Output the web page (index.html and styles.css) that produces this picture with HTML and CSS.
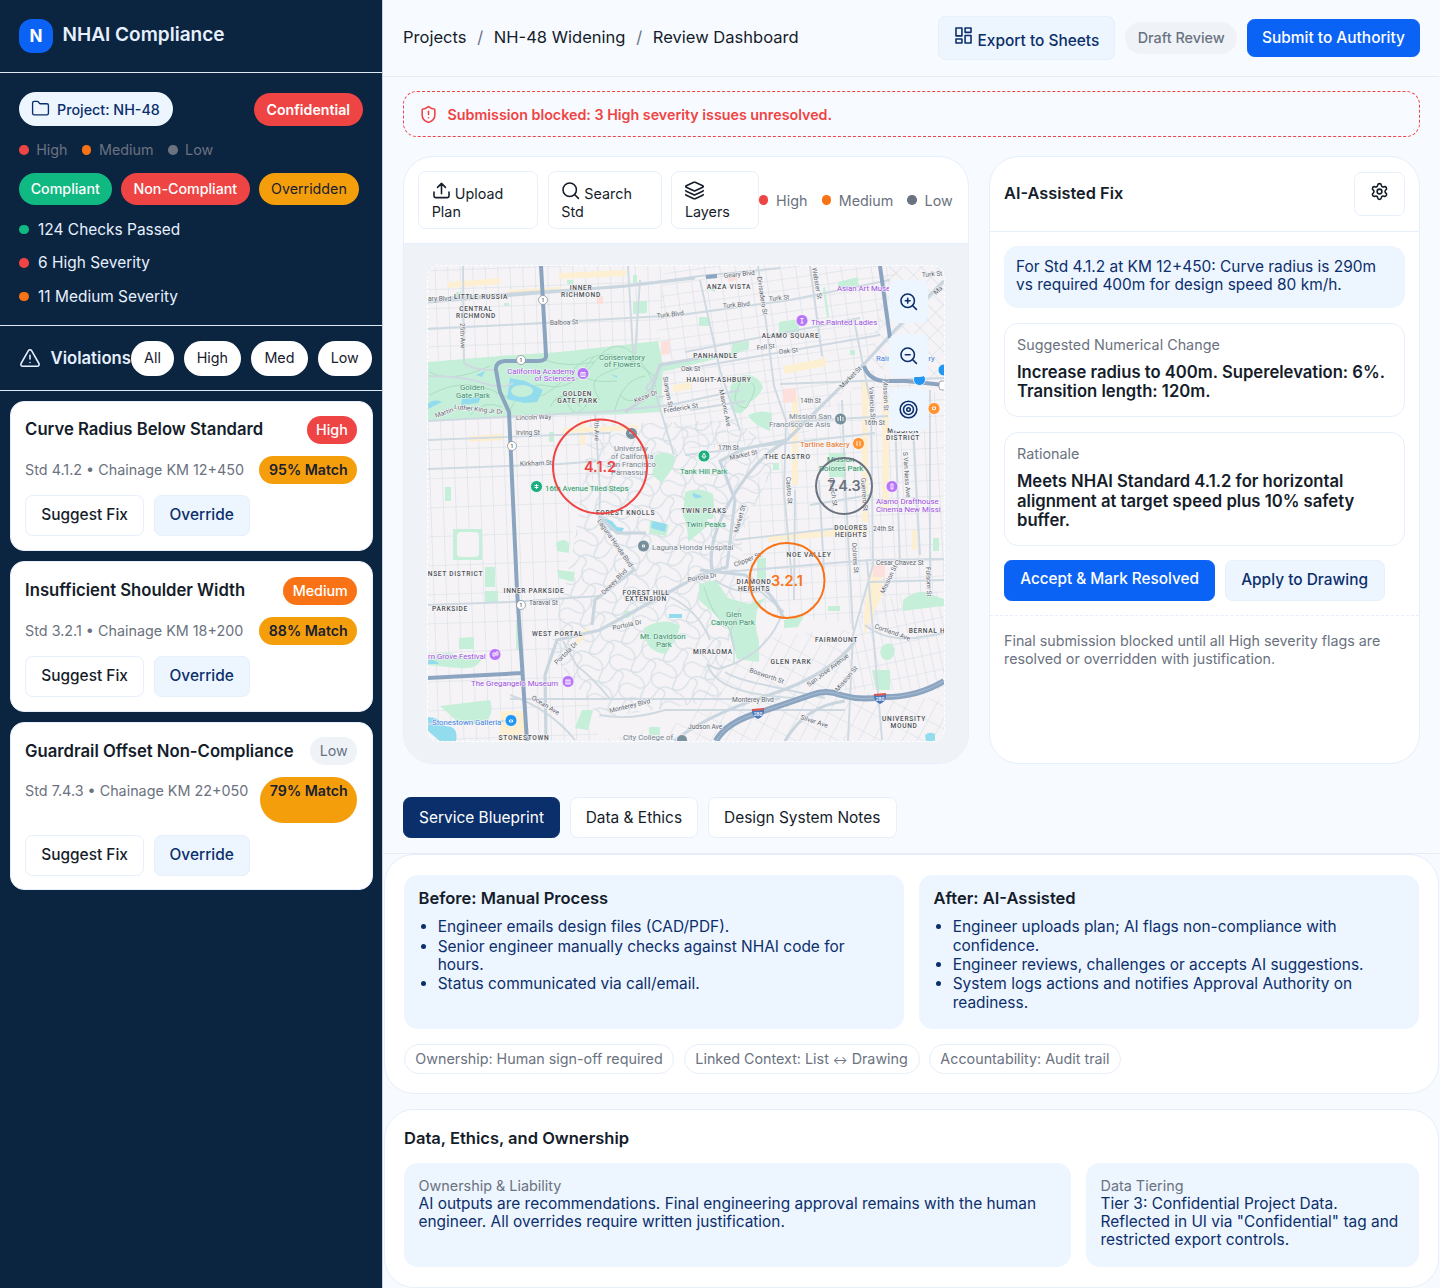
FILE: index.html
```html
<!DOCTYPE html>
<html lang="en">
<head>
<meta charset="utf-8">
<title>NHAI Compliance</title>
<link rel="stylesheet" href="styles.css">
</head>
<body>
<div class="app">
  <aside class="sidebar">
    <div class="brand"><span class="logo">N</span><span class="brand-name">NHAI Compliance</span></div>
    <section class="summary">
      <div class="project-row">
        <span class="project-pill"><svg class="icon" viewBox="0 0 24 24"><path d="M20 20a2 2 0 0 0 2-2V8a2 2 0 0 0-2-2h-7.900a2 2 0 0 1-1.690-.9L9.600 3.900A2 2 0 0 0 7.930 3H4a2 2 0 0 0-2 2v13a2 2 0 0 0 2 2Z"/></svg>Project: NH-48</span>
        <span class="confidential">Confidential</span>
      </div>
      <div class="legend side-legend"><span><i class="dot red"></i>High</span><span><i class="dot orange"></i>Medium</span><span><i class="dot gray"></i>Low</span></div>
      <div class="status-row"><span class="status ok">Compliant</span><span class="status bad">Non-Compliant</span><span class="status over">Overridden</span></div>
      <ul class="stats"><li><i class="dot green"></i>124 Checks Passed</li><li><i class="dot red"></i>6 High Severity</li><li><i class="dot orange"></i>11 Medium Severity</li></ul>
    </section>
    <div class="violations-head">
      <svg class="icon warn" viewBox="0 0 24 24"><path d="m21.730 18-8-14a2 2 0 0 0-3.480 0l-8 14A2 2 0 0 0 4 21h16a2 2 0 0 0 1.730-3"/><path d="M12 9v4M12 17h.01"/></svg>
      <span class="violations-title">Violations</span>
      <div class="filters"><span class="f-all">All</span><span class="f-high">High</span><span class="f-med">Med</span><span class="f-low">Low</span></div>
    </div>
    <div class="violations">
      <article class="violation">
        <div class="v-row"><h3>Curve Radius Below Standard</h3><span class="badge red">High</span></div>
        <div class="v-row v-meta"><span>Std 4.1.2 • Chainage KM 12+450</span><span class="badge match">95% Match</span></div>
        <div class="v-actions"><button class="btn suggest">Suggest Fix</button><button class="btn soft override">Override</button></div>
      </article>
      <article class="violation">
        <div class="v-row"><h3>Insufficient Shoulder Width</h3><span class="badge orange">Medium</span></div>
        <div class="v-row v-meta"><span>Std 3.2.1 • Chainage KM 18+200</span><span class="badge match">88% Match</span></div>
        <div class="v-actions"><button class="btn suggest">Suggest Fix</button><button class="btn soft override">Override</button></div>
      </article>
      <article class="violation tall">
        <div class="v-row"><h3>Guardrail Offset Non-Compliance</h3><span class="badge low">Low</span></div>
        <div class="v-row v-meta"><span>Std 7.4.3 • Chainage KM 22+050</span><span class="badge match">79% Match</span></div>
        <div class="v-actions"><button class="btn suggest">Suggest Fix</button><button class="btn soft override">Override</button></div>
      </article>
    </div>
  </aside>

  <main class="main">
    <header class="topbar">
      <nav class="crumbs"><span>Projects</span><b>/</b><span>NH-48 Widening</span><b>/</b><span>Review Dashboard</span></nav>
      <div class="top-actions">
        <button class="btn soft export"><svg class="icon" viewBox="0 0 24 24"><rect x="2.500" y="2.500" width="7.500" height="10"/><rect x="14" y="2.500" width="7.500" height="5.500"/><rect x="14" y="12" width="7.500" height="9.500"/><rect x="2.500" y="16.500" width="7.500" height="5"/></svg><span>Export to Sheets</span></button>
        <span class="draft">Draft Review</span>
        <button class="btn primary submit">Submit to Authority</button>
      </div>
    </header>

    <div class="alert"><svg class="icon" viewBox="0 0 24 24"><path d="M20 13c0 5-3.500 7.500-7.660 8.950a1 1 0 0 1-.670-.010C7.500 20.500 4 18 4 13V6a1 1 0 0 1 1-1c2 0 4.500-1.200 6.240-2.720a1.170 1.170 0 0 1 1.520 0C14.510 3.810 17 5 19 5a1 1 0 0 1 1 1z"/><path d="M12 8v4M12 16h.01"/></svg><span>Submission blocked: 3 High severity issues unresolved.</span></div>

    <div class="workspace">
      <section class="card plan">
        <div class="toolbar">
          <button class="btn tool t-upload"><svg class="icon" viewBox="0 0 24 24"><path d="M12 16V3M7 8l5-5 5 5M2.500 14v5a2 2 0 0 0 2 2h15a2 2 0 0 0 2-2v-5"/></svg> Upload<br>Plan</button>
          <button class="btn tool t-search"><svg class="icon" viewBox="0 0 24 24"><circle cx="11" cy="11" r="8.500"/><path d="m22 22-4.900-4.900"/></svg> Search<br>Std</button>
          <button class="btn tool t-layers"><svg class="icon" viewBox="0 0 24 24"><path d="M12.830 1.680a2 2 0 0 0-1.660 0L1.600 6.080a1 1 0 0 0 0 1.830l9.580 4.410a2 2 0 0 0 1.660 0l9.580-4.400a1 1 0 0 0 0-1.830z"/><path d="M1 12a1 1 0 0 0 .6.910l9.580 4.400a2 2 0 0 0 1.650 0l9.580-4.400A1 1 0 0 0 23 12"/><path d="M1 17a1 1 0 0 0 .6.910l9.580 4.400a2 2 0 0 0 1.650 0l9.580-4.400A1 1 0 0 0 23 17"/></svg><br>Layers</button>
          <div class="legend"><span><i class="dot red"></i>High</span><span><i class="dot orange"></i>Medium</span><span><i class="dot gray"></i>Low</span></div>
        </div>
        <div class="map-area">
          <div class="map">
          <svg class="map-svg" viewBox="428 266 516 475">
            <defs>
              <pattern id="gRich" width="12.500" height="19" patternUnits="userSpaceOnUse" patternTransform="rotate(-2)"><path class="st" d="M0 0H12.500M0 0V19"/></pattern>
              <pattern id="gSun" width="12.500" height="29" patternUnits="userSpaceOnUse" patternTransform="rotate(-2)"><path class="st" d="M0 0H12.500M0 0V29"/></pattern>
              <pattern id="gNe" width="15" height="11" patternUnits="userSpaceOnUse" patternTransform="rotate(-8)"><path class="st" d="M0 0H15M0 0V11"/></pattern>
              <pattern id="gMis" width="12" height="16" patternUnits="userSpaceOnUse" patternTransform="rotate(-3)"><path class="st" d="M0 0H12M0 0V16"/></pattern>
              <pattern id="gSoma" width="11" height="14" patternUnits="userSpaceOnUse" patternTransform="rotate(-45)"><path class="st" d="M0 0H11M0 0V14"/></pattern>
              <pattern id="gBern" width="9" height="17" patternUnits="userSpaceOnUse" patternTransform="rotate(-12)"><path class="st" d="M0 0H9M0 0V17"/></pattern>
              <pattern id="gSth" width="13" height="20" patternUnits="userSpaceOnUse" patternTransform="rotate(28)"><path class="st" d="M0 0H13M0 0V20"/></pattern>
              <pattern id="gHill" width="34" height="30" patternUnits="userSpaceOnUse" patternTransform="rotate(-18)"><path class="st" d="M0 8Q9-2 17 8T34 8M0 23Q9 14 17 22T34 23M5 0Q-3 12 6 18T5 30M24 0Q31 10 23 17T24 30"/></pattern>
            </defs>
            <rect class="land" x="428" y="266" width="516" height="475"/>
            <path fill="url(#gRich)" d="M428 266H664L660 345 428 362z"/>
            <path fill="url(#gSun)" d="M428 421L626 408 575 520 560 600 600 741H428z"/>
            <path fill="url(#gNe)" d="M664 266H900L870 360 800 442 690 450 650 395z"/>
            <path fill="url(#gMis)" d="M800 442L870 370 944 395V600L860 625 735 610 755 480z"/>
            <path fill="url(#gSoma)" d="M885 266H944V385L870 366z"/>
            <path fill="url(#gBern)" d="M865 600L944 590V690L840 690z"/>
            <path fill="url(#gSth)" d="M710 640L850 630 835 690 944 700V741H600L690 720z"/>
            <path fill="url(#gHill)" d="M590 425L735 420 780 455 745 525 735 600 720 700 600 718 550 650 575 540z"/>
            <g class="sand">
              <path d="M448 282l52-4v6l-52 4zM559 273l67-3v6l-67 3zM508 290l54-3v5l-54 3zM469 436l34-2v6l-34 2zM563 428l75-3v5l-75 3zM580 420h5v25h-5zM784 366l42-8v8l-42 8zM768 536l100-9v6l-100 9zM862 382h6v140h-6zM882 395h7v115h-7zM912 530h5v20h-5zM864 610l8-45h10v30l-18 40zM792 395h6v90h-6zM673 385l18-3v7l-18 3zM500 711h25v30h-25zM590 630l-12 15-3-4 11-13z"/>
            </g>
            <path class="hosp" d="M783 389l13-1v14l-13 1zM661 342l9-2v14l-9 1zM873 565h12v12h-12zM728 275l9-2v7l-9 2zM597 296h6v8h-6z"/>
            <g class="park">
              <path d="M428 362L500 356 560 352 658 341 663 365 661 412 625 414 560 415 428 421z"/>
              <path d="M662 365l70-13v-9l17-2v8l-21 7-66 16zM633 302l14-1v12l-14 1zM779 322l20-3v13l-20 2zM838 282l20-5v8l-20 6zM730 394q-1-16 15-19 12-1 18 12-4 10-13 15-7 15-16 10-6-6-4-18zM748 415q12-6 24-2l-2 18q-17-6-22-16zM655 455q12-6 20 2l-3 12-10 14-10-8zM685 492q14-6 28 2l2 20q-8-5-8 12l-9 8-10 8q0-18-5-26zM706 511h7v8h-7zM829 453h17v24h-17z"/>
              <path d="M699 584l17-4 12 18 21 6 16-6-8 12q-3 18 2 30v22l-22-3-10-34-28-25zM650 520l19 5-3 11-17-3zM556 543q8-6 13 0v10l-12-2zM557 570l18 2-2 10-14-4zM453 529h29v31h-29zM485 591h13v12h-13zM485 567h10v20h-10zM459 638l15-1v12h-15zM428 660q16-11 28-5t26 3q-4 12-24 10l-30-3zM516 620h5v30h-5zM644 628q20-12 36-2-3 12-14 28-22-2-22-26zM582 710h11l-5 20-13-2zM903 600q14-11 24-7l17 6v7q-18 2-41 5zM872 670h18v20h-14zM884 645q8-5 11 5-2 13-12 9-6-8 1-14zM757 558h9v22h-9zM784 620l20-4-6 11-14 1zM440 706l50-6q6 18-10 25l-22-3zM933 538h6v13h-6zM649 727h11v8h-11zM828 606h12v5h-12z"/>
              <path d="M445 487h6v14h-6zM549 432h5v10h-5zM626 610l8 3-6 5-7-1zM707 289l8-3v6zM699 317h10v9h-10zM850 350h5v5h-5zM773 463h6v7h-6zM825 287l4 30-2 1-4-30zM456 292h5v6h-5zM504 303h5v3h-5zM567 280h6v4h-6zM633 275h4v8h-4zM541 378h0z"/>
            </g>
            <path class="parkline" d="M430 395q35-20 70-1t70-21 88 6M510 410q15-30 38-24t50-28 58 29M550 407q12-22 31 0M595 356q-30 29 22 25M615 410q7-30 30-34M600 400c-20-30 15-25 40-43M740 383q-12 23 6 25 14-22 5-25M704 587q9 30 20 36t10 42M553 402q8-12 16 4t22-8M620 395q12 14 30-6M545 360q20 8 50 2M430 372q20 12 60-6M470 415q14-16 32-8"/>
            <rect class="land" x="457" y="532" width="22" height="25" rx="4"/>
            <g class="water"><path d="M510 378l15 3 18 9-6 12-13 1-17-4zM427 405q6-7 15-3l-14 7zM462 399l20-3-4 7-17 2zM603 518l9 3 5 6 7 1-2 4-12-2zM652 521l15 3-2 8-14-4zM428 717q10 0 17 9 14 0 11 15H440l-12-10zM693 493a4 3 0 1 0 9 3zM428 660q7-1 11 4h-11zM669 614h13v4h-13zM925 735q4-4 10-1v7h-9zM610 374l7 2v2zM476 375l9-4-3 6z"/></g>
            <ellipse class="park" cx="522" cy="391" rx="11" ry="6"/>
            <g class="road">
              <path d="M428 299L545 291 620 287 700 276 780 268M428 329L525 324 680 315 790 300 890 280M463 266l1 97q8 7 30 7M664 363l-18 25q12 12 18 8M428 421L615 411 670 405 740 390M428 440L610 433M428 469L560 464 600 461M428 605L510 602 600 596M595 412l5 80-1 30M640 280l-5 75M428 376q35 0 55 7t30 0M628 266l5 86M656 395l18 60"/>
              <path d="M700 280l20 90 20 60M758 266l8 56 8 64 12 35-2 70 8 90M810 266l12 90M854 320l17 85 2 160-20 70-5 106M685 352L860 318M685 369L880 335M690 410L745 401M685 455L875 433M780 384L944 378M790 422L888 416M735 540L864 525M810 505L870 495M725 572L870 560 944 559M867 560l15 180M819 480l5 90M795 490l-1 110M912 405l8 150M930 390v205M895 415l5 150M945 580L870 582M842 400l3 80 8 150"/>
              <path d="M735 650l-5-17 10-25M710 640q-12-30-40-43M715 580q20 15 45 11l23 20q-15 45-65 58l-10-4q8 30 90 33M780 699L510 699M610 699q-18-22-33-33l-14-25M428 724l80-3M510 695q40 14 65 45M600 715q30 6 65-5h180M865 625q20 16 50 13l29-5M725 672q10 7 40 13l60 13"/>
            </g>
            <g class="road maj">
              <path d="M428 302l197-16 70-8M800 270M944 281L895 330 865 363 787 440 743 449 720 461 735 500 727 567 700 575 600 630 557 640 545 675 546 741M625 412L650 395 660 365 700 358M599 516l18 17h29M600 520l34 50-39 30-3 25M712 570q-5-30 20-72t55-57M856 640q-25 35-87 55t-95 46M785 741q20-35 60-40M700 570l45 5q27 14 39 44"/>
            </g>
            <g class="hwy">
              <path d="M541 266L546 355Q547 361 538 361L505 361Q495 362 496 370L500 392 509 412 517 590 527 741M428 678L522 673M880 266L890 338M864 366q5 14 20 15h22l38 4M706 277l11-1"/>
              <path class="thick" d="M716 741q10-19 45-29l50-17q15-6 30 0 20 6 40 2 35 1 63-16"/>
              <path class="casing" d="M716 741q10-19 45-29l50-17q15-6 30 0 20 6 40 2 35 1 63-16"/>
            </g>
            <g class="shield"><circle cx="543" cy="300" r="4.500"/><circle cx="521" cy="360" r="4.500"/><circle cx="512" cy="446" r="4.500"/><circle cx="521" cy="605" r="4.500"/><rect x="939" y="381" width="9" height="9" rx="3"/></g>
            <g class="shield-no"><text x="543" y="302">1</text><text x="521" y="362">1</text><text x="512" y="448">1</text><text x="521" y="607">1</text></g>
            <g class="inter"><path d="M752 709q6 3 12 0 1 7-6 10-7-3-6-10zM874 694q6 3 12 0 1 7-6 10-7-3-6-10z"/></g>
            <path class="inter-top" d="M752 710l12-1M874 695l12-1"/>
            <g class="shield-no light"><text x="758" y="716">280</text><text x="880" y="701">280</text></g>
            <g class="area">
              <text x="481" y="298.500">LITTLE RUSSIA</text><text x="476" y="311">CENTRAL</text><text x="476" y="318">RICHMOND</text><text x="581" y="290">INNER</text><text x="581" y="296.500">RICHMOND</text><text x="729" y="289">ANZA VISTA</text><text x="790.500" y="338">ALAMO SQUARE</text><text x="715.500" y="358">PANHANDLE</text><text x="719" y="381.500">HAIGHT-ASHBURY</text><text x="577.500" y="396">GOLDEN</text><text x="577.500" y="403">GATE PARK</text><text x="787.500" y="458.500">THE CASTRO</text><text x="903" y="433">MISSION</text><text x="903" y="440">DISTRICT</text>
              <text x="625.500" y="514.500">FOREST KNOLLS</text><text x="704" y="512.500">TWIN PEAKS</text><text x="455.500" y="576">NSET DISTRICT</text><text x="534" y="593">INNER PARKSIDE</text><text x="450" y="611">PARKSIDE</text><text x="646" y="594.500">FOREST HILL</text><text x="646" y="601">EXTENSION</text><text x="557.500" y="636">WEST PORTAL</text><text x="524" y="740">STONESTOWN</text><text x="851" y="530">DOLORES</text><text x="851" y="537">HEIGHTS</text><text x="809" y="557">NOE VALLEY</text><text x="754" y="584">DIAMOND</text><text x="754" y="591">HEIGHTS</text><text x="836.500" y="641.500">FAIRMOUNT</text><text x="713" y="654">MIRALOMA</text><text x="791" y="663.500">GLEN PARK</text><text x="927" y="633">BERNAL H</text><text x="904" y="721">UNIVERSITY</text><text x="904" y="728">MOUND</text>
            </g>
            <g class="street">
              <text x="428" y="301">ary Blvd</text><text x="550" y="325" transform="rotate(-2 550 325)">Balboa St</text><text x="657" y="318" transform="rotate(-6 657 318)">Turk Blvd</text><text transform="translate(460 323) rotate(88)">25th Ave</text><text x="516" y="420" transform="rotate(-2 516 420)">Lincoln Way</text><text x="516" y="435">Irving St</text><text x="520" y="466" transform="rotate(-2 520 466)">Kirkham St</text><text transform="translate(436 418) rotate(-20)">Martin</text><text x="454" y="409" transform="rotate(6 454 409)">Luther King Jr Dr</text><text transform="translate(594 419) rotate(88)">7th Ave</text><text transform="translate(635 403) rotate(-22)">Kezar Dr</text><text transform="translate(663 377) rotate(80)">Stanyan St</text><text transform="translate(664 413) rotate(-9)">Frederick St</text><text x="681" y="371">Oak St</text>
              <text x="724" y="278" transform="rotate(-6 724 278)">Geary Blvd</text><text transform="translate(757 277) rotate(81)">Divisadero St</text><text transform="translate(812 268) rotate(80)">Webster St</text><text x="723" y="308" transform="rotate(-4 723 308)">Turk Blvd</text><text x="769" y="301" transform="rotate(-5 769 301)">Turk St</text><text x="757" y="350" transform="rotate(-6 757 350)">Fell St</text><text x="779" y="354" transform="rotate(-6 779 354)">Oak St</text><text x="922" y="277" transform="rotate(-4 922 277)">Turk St</text><text transform="translate(842 389) rotate(-45)">Market St</text><text x="800" y="403">14th St</text><text x="864" y="425">16th St</text><text x="718" y="450">17th St</text><text x="730" y="460" transform="rotate(-12 730 460)">Market St</text><text transform="translate(719 390) rotate(78)">Masonic Ave</text><text transform="translate(869 387) rotate(87)">Valencia St</text><text transform="translate(883 380) rotate(88)">Mission St</text><text transform="translate(903 452) rotate(86)">S Van Ness Ave</text><text transform="translate(786 477) rotate(86)">Castro St</text><text transform="translate(829 478) rotate(82)">Church St</text><text transform="translate(861 478) rotate(86)">Guerrero St</text><text transform="translate(936 295) rotate(-42)">Ma</text>
              <text transform="translate(597 521) rotate(55)">Laguna Honda Blvd</text><text transform="translate(604 595) rotate(-45)">Dewey Blvd</text><text x="529" y="605">Taraval St</text><text transform="translate(613 630) rotate(-12)">Portola Dr</text><text transform="translate(557 665) rotate(-45)">Portola Dr</text><text transform="translate(688 582) rotate(-10)">Portola Dr</text><text transform="translate(531 699) rotate(31)">Ocean Ave</text><text transform="translate(610 713) rotate(-14)">Monterey Blvd</text><text transform="translate(738 533) rotate(-74)">Market St</text><text transform="translate(735 567) rotate(-22)">Clipper St</text><text transform="translate(852 543) rotate(86)">Dolores St</text><text x="873" y="531">24th St</text><text x="876" y="565">Cesar Chavez St</text><text transform="translate(884 594) rotate(-64)">Mission St</text><text transform="translate(926 567) rotate(88)">Folsom St</text><text transform="translate(874 628) rotate(20)">Cortland Ave</text><text transform="translate(749 672) rotate(19)">Bosworth St</text><text transform="translate(809 687) rotate(-37)">San Jose Avenue</text><text transform="translate(838 692) rotate(-50)">Mission St</text><text x="732" y="702">Monterey Blvd</text><text x="688" y="729">Judson Ave</text><text transform="translate(800 719) rotate(18)">Silver Ave</text>
            </g>
            <g class="poi purple"><text x="575" y="373.500" text-anchor="end">California Academy</text><text x="575" y="381" text-anchor="end">of Sciences</text><text x="837" y="291">Asian Art Muse</text><text x="811" y="324.500">The Painted Ladies</text><text x="876" y="504">Alamo Drafthouse</text><text x="876" y="512">Cinema New Missi</text><text x="428" y="658.500">rn Grove Festival</text><text x="471" y="685.500">The Gregangelo Museum</text></g>
            <g class="poi greentext"><text x="599" y="359.500">Conservatory</text><text x="604" y="367">of Flowers</text><text x="460" y="390">Golden</text><text x="456" y="398">Gate Park</text><text x="545" y="490.500">16th Avenue Tiled Steps</text><text x="680" y="473.500">Tank Hill Park</text><text x="686" y="527">Twin Peaks</text><text x="827" y="462">Mission</text><text x="819" y="470.500">Dolores Park</text><text x="640" y="639">Mt. Davidson</text><text x="656" y="647">Park</text><text x="726" y="617">Glen</text><text x="711" y="625">Canyon Park</text></g>
            <g class="poi slate"><text x="614" y="450.500">University</text><text x="611" y="458.500">of California</text><text x="607" y="466.500">San Francisco</text><text x="611" y="474.500">Parnassus...</text><text x="789" y="419">Mission San</text><text x="769" y="427">Francisco de Asis</text><text x="652" y="550">Laguna Honda Hospital</text><text x="623" y="740">City College of</text></g>
            <g class="poi bluetext"><text x="876" y="361">Rainbow Grocery</text><text x="432" y="724.500">Stonestown Galleria</text></g>
            <g class="poi orangetext"><text x="800" y="447">Tartine Bakery</text></g>
            <g class="pins">
              <g fill="#b875f8"><circle cx="583" cy="373.500" r="6"/><circle cx="802" cy="320.500" r="6"/><circle cx="892" cy="486.500" r="6"/><circle cx="495" cy="654.500" r="6"/><circle cx="568" cy="681.500" r="6"/></g>
              <g fill="#1eae7e"><circle cx="536.500" cy="486.500" r="6"/><circle cx="704" cy="456" r="6"/></g>
              <g fill="#78909c"><circle cx="631.500" cy="433.500" r="6"/><circle cx="840.500" cy="419" r="6"/><circle cx="643.500" cy="546" r="6"/><circle cx="682" cy="740" r="5.500"/></g>
              <g fill="#2196f3"><circle cx="511" cy="720.500" r="6"/><circle cx="919.500" cy="379.500" r="6"/><circle cx="944" cy="370" r="6"/></g>
              <g fill="#ff9130"><circle cx="858.500" cy="443.500" r="6"/><circle cx="934" cy="408.500" r="6"/></g>
              <path class="glyph" d="M580.500 372.500h5M581 373v3M583 373v3M585 373v3M580.500 376.500h5M800.500 318.500h3M802 318v5M800.500 323h3M565.500 680h5M566 680v4M568 680v4M570 680v4M565.500 684h5M493 653h2v3h-2zM496 652h2v3h-2zM891 484h2v5h-2zM536.500 484v5M534.500 485.500h4M534.500 487.500h4M704 453l-2 4h4zM704 457v2M838 417v4M840.500 416v5M843 417v4M629 433l5 0M642.500 545h2v2h-2zM509.500 720h3v2h-3zM857 441v5M860 441v5M932.500 407h3v2.500h-3z"/>
            </g>
            <g class="flag"><circle class="f-red" cx="600" cy="466.500" r="47"/><circle class="f-orange" cx="787" cy="580.500" r="37.500"/><circle class="f-gray" cx="844" cy="486" r="28"/></g>
            <g class="flag-no"><text class="t-red" x="600" y="471.500">4.1.2</text><text class="t-orange" x="787" y="585.500">3.2.1</text><text class="t-gray" x="844" y="491">7.4.3</text></g>
          </svg>
          <div class="map-tools">
            <span><svg class="icon" viewBox="0 0 24 24"><circle cx="11" cy="11" r="8.500"/><path d="m22 22-5-5M11 8v6M8 11h6"/></svg></span>
            <span><svg class="icon" viewBox="0 0 24 24"><circle cx="11" cy="11" r="8.500"/><path d="m22 22-5-5M8 11h6"/></svg></span>
            <span><svg class="icon" viewBox="0 0 24 24"><circle cx="12" cy="12" r="10.500"/><circle cx="12" cy="12" r="6.300"/><circle cx="12" cy="12" r="2.200"/></svg></span>
          </div>
          </div>
        </div>
      </section>

      <section class="card fix">
        <div class="fix-head"><h2>AI-Assisted Fix</h2><button class="btn gear"><svg class="icon" viewBox="0 0 24 24"><path d="M9.670 4.140a2.340 2.340 0 0 1 4.660 0 2.340 2.340 0 0 0 3.320 1.910 2.340 2.340 0 0 1 2.330 4.030 2.340 2.340 0 0 0 0 3.840 2.340 2.340 0 0 1-2.330 4.030 2.340 2.340 0 0 0-3.320 1.910 2.340 2.340 0 0 1-4.660 0 2.340 2.340 0 0 0-3.320-1.910 2.340 2.340 0 0 1-2.330-4.030 2.340 2.340 0 0 0 0-3.840 2.340 2.340 0 0 1 2.330-4.030 2.340 2.340 0 0 0 3.320-1.910"/><circle cx="12" cy="12" r="3"/></svg></button></div>
        <div class="fix-body">
          <p class="info">For Std 4.1.2 at KM 12+450: Curve radius is 290m<br>vs required 400m for design speed 80 km/h.</p>
          <div class="detail change"><span>Suggested Numerical Change</span><strong>Increase radius to 400m. Superelevation: 6%.<br>Transition length: 120m.</strong></div>
          <div class="detail rationale"><span>Rationale</span><strong>Meets NHAI Standard 4.1.2 for horizontal<br>alignment at target speed plus 10% safety<br>buffer.</strong></div>
          <div class="fix-actions"><button class="btn primary accept">Accept &amp; Mark Resolved</button><button class="btn soft apply">Apply to Drawing</button></div>
        </div>
        <p class="fix-note">Final submission blocked until all High severity flags are<br>resolved or overridden with justification.</p>
      </section>
    </div>

    <div class="tabs"><button class="btn tab1 active">Service Blueprint</button><button class="btn tab2">Data &amp; Ethics</button><button class="btn tab3">Design System Notes</button></div>

    <section class="panel blueprint">
      <div class="two">
        <div class="tile"><h4>Before: Manual Process</h4><ul><li>Engineer emails design files (CAD/PDF).</li><li>Senior engineer manually checks against NHAI code for<br>hours.</li><li>Status communicated via call/email.</li></ul></div>
        <div class="tile"><h4>After: AI-Assisted</h4><ul><li>Engineer uploads plan; AI flags non-compliance with<br>confidence.</li><li>Engineer reviews, challenges or accepts AI suggestions.</li><li>System logs actions and notifies Approval Authority on<br>readiness.</li></ul></div>
      </div>
      <div class="notes"><span class="n1">Ownership: Human sign-off required</span><span class="n2"><span>Linked Context: List <i class="arrow">↔</i> Drawing</span></span><span class="n3">Accountability: Audit trail</span></div>
    </section>

    <section class="panel ethics">
      <h4>Data, Ethics, and Ownership</h4>
      <div class="ethics-grid">
        <div class="tile"><span>Ownership &amp; Liability</span><p>AI outputs are recommendations. Final engineering approval remains with the human<br>engineer. All overrides require written justification.</p></div>
        <div class="tile"><span>Data Tiering</span><p>Tier 3: Confidential Project Data.<br>Reflected in UI via "Confidential" tag and<br>restricted export controls.</p></div>
      </div>
    </section>
  </main>
</div>
</body>
</html>
```
FILE: styles.css
```css
* { box-sizing: border-box; }
body { margin: 0; background: #f7faff; color: #151d2b; font: 15.440px/18px Inter, sans-serif; }
h2, h3, h4, p, ul { margin: 0; padding: 0; font-weight: 400; }
button { font: inherit; color: inherit; padding: 0; margin: 0; }
.app { display: flex; width: 1440px; height: 1288px; overflow: hidden; }
.icon { width: 19px; height: 19px; fill: none; stroke: currentColor; stroke-width: 2; stroke-linecap: round; stroke-linejoin: round; flex: none; }
.dot { width: 9.600px; height: 9.600px; border-radius: 50%; display: block; }
.red { background: #ef4444; }
.orange { background: #f97316; }
.gray { background: #6b7280; }
.green { background: #10b981; }

.btn { display: flex; align-items: center; justify-content: center; background: #fff; border: 1px solid #e6effb; border-radius: 7.600px; white-space: nowrap; }
.btn.soft { background: #edf5ff; color: #0b2f6b; font-weight: 500; }
.btn.primary { background: #0b63f6; border-color: #0b63f6; color: #fff; font-weight: 500; }

/* Sidebar */
.sidebar { width: 383px; flex: none; background: #0b2440; border-right: 1px solid #c9d4e2; color: #e6f0ff; }
.brand { height: 73px; border-bottom: 1px solid #dfe9f6; padding: 0 19px; display: flex; align-items: center; gap: 9.500px; }
.logo { width: 34px; height: 34px; border-radius: 13px; background: #0b63f6; color: #fff; font-weight: 700; font-size: 17px; display: grid; place-items: center; }
.brand-name { font-weight: 600; font-size: 19.050px; padding-bottom: 2px; }
.summary { height: 253px; border-bottom: 1px solid #dfe9f6; padding: 19px 19px 0; }
.project-row { display: flex; justify-content: space-between; align-items: center; height: 34px; }
.project-pill { width: 154px; height: 34px; border-radius: 17px; background: #edf5ff; color: #0b2f6b; font-size: 14.300px; font-weight: 500; display: flex; align-items: center; gap: 7px; padding: 1px 0 0 12px; }
.project-pill .icon { stroke-width: 1.700; position: relative; top: -1px; }
.confidential { width: 109.500px; height: 32.500px; border-radius: 17px; background: #ef4444; color: #fff; font-size: 14.200px; font-weight: 600; display: grid; place-items: center; margin-top: 1px; }
.legend { display: flex; gap: 14.400px; font-size: 14.300px; color: #6b7280; }
.legend span { display: flex; align-items: center; gap: 7.600px; }
.side-legend { margin-top: 15px; height: 18px; }
.status-row { display: flex; gap: 9.600px; margin-top: 13.500px; font-size: 14.250px; font-weight: 500; color: #fff; }
.status { height: 32.500px; border-radius: 17px; display: grid; place-items: center; }
.status.ok { background: #10b981; width: 92.500px; }
.status.bad { background: #ef4444; width: 128.500px; }
.status.over { background: #f59e0b; width: 99.500px; color: #17202e; font-weight: 400; }
.stats { list-style: none; display: grid; gap: 15.600px; margin-top: 15.500px; }
.stats li { display: flex; align-items: center; gap: 9.500px; height: 18px; }
.violations-head { height: 64.500px; border-bottom: 1px solid #dfe9f6; padding: 1px 0 0 19px; display: flex; align-items: center; }
.warn { width: 22px; height: 22px; stroke-width: 1.700; }
.violations-title { font-size: 16.700px; font-weight: 600; margin-left: 9.500px; width: 80.500px; flex: none; }
.filters { display: flex; gap: 9.600px; font-size: 14.300px; color: #17202e; }
.filters span { background: #fff; height: 35px; border-radius: 18px; display: grid; place-items: center; }
.f-all { width: 43px; } .f-high { width: 57.500px; } .f-med { width: 57.500px; } .f-low { width: 54px; }
.violations { padding: 10px 9.500px; display: grid; gap: 9.900px; }
.violation { height: 150.800px; width: 363.500px; border-radius: 14px; background: #fff; border: 1px solid #e6effb; color: #151d2b; padding: 14.400px 14.600px; }
.violation.tall { height: 168.500px; }
.v-row { display: flex; justify-content: space-between; align-items: center; height: 28px; }
.v-row h3 { font-size: 16.680px; font-weight: 600; white-space: nowrap; padding-bottom: 1px; }
.v-meta { margin-top: 12px; font-size: 14.350px; color: #6b7280; white-space: nowrap; }
.badge { height: 28px; padding: 0 9.600px; border-radius: 23px; font-size: 14.300px; font-weight: 500; color: #fff; line-height: 28px; }
.badge.match { background: #f59e0b; color: #17202e; font-weight: 600; font-size: 14.200px; }
.badge.low { background: #eff3f8; color: #6b7280; font-weight: 400; }
.v-actions { display: flex; gap: 9.600px; margin-top: 11.300px; }
.v-actions .btn { height: 41px; font-weight: 500; padding-bottom: 1px; }
.suggest { width: 119px; } .override { width: 96px; }
.tall .v-meta { height: 46px; align-items: flex-start; line-height: 28px; }
.tall .match { height: 46px; }

/* Main column */
.main { flex: 1; min-width: 0; padding-right: 1px; }
.topbar { height: 76.500px; border-bottom: 1px solid #e6edf7; padding: 0 19px 0 20px; display: flex; align-items: center; justify-content: space-between; }
.crumbs { display: flex; gap: 10.700px; font-size: 16.550px; padding-bottom: 2px; }
.crumbs b { font-weight: 400; color: #6b7280; }
.top-actions { display: flex; align-items: center; gap: 9.800px; }
.export { width: 177px; height: 44.500px; gap: 4px; }
.export .icon { position: relative; top: -2px; left: -1px; }
.export span { position: relative; top: 3px; }
.draft { width: 112px; height: 32.500px; border-radius: 17px; background: #eff3f8; color: #6b7280; font-size: 14.400px; font-weight: 500; display: grid; place-items: center; }
.submit { width: 173px; height: 38.500px; }
.alert { margin: 14.500px 19px 0 20px; height: 46px; border: 1px dashed #ef4444; border-radius: 14px; color: #ef4444; font-size: 14.290px; font-weight: 600; display: flex; align-items: center; gap: 10px; padding-left: 14.500px; }
.alert span { padding-top: 1px; }
.workspace { display: grid; grid-template-columns: 566px 431.500px; gap: 19.500px; margin: 19.200px 19px 0 20px; height: 607.500px; }
.card { border: 1px solid #e6effb; border-radius: 30px; background: #fff; overflow: hidden; }
.toolbar { height: 87px; border-bottom: 1px solid #e6effb; display: flex; align-items: center; padding-left: 14.200px; }
.tool { display: block; height: 57.500px; text-align: left; font-size: 14.350px; line-height: 18px; padding: 2px 0 0 12.500px; margin-right: 9.600px; }
.tool .icon { vertical-align: -1px; }
.t-upload { width: 120px; } .t-search { width: 114px; } .t-layers { width: 87.500px; margin-right: 0; }
.toolbar .legend { padding-top: 2px; gap: 14.200px; }
.toolbar .legend .dot { margin-top: -2px; }
.map-area { background: #eff3f8; height: 520px; padding: 21.500px 24px 23px; }
.map { position: relative; width: 516px; height: 475px; }
.map-svg { display: block; width: 516px; height: 475px; border-radius: 12px; outline: 1px dashed #fff; }
.map-tools { position: absolute; top: 14px; right: 16px; display: grid; gap: 11px; }
.map-tools span { width: 39.500px; height: 43px; border-radius: 8px; background: #edf5ff; color: #0b2f6b; display: grid; place-items: center; }
.fix-head { height: 74.500px; border-bottom: 1px solid #e6effb; padding: 0 14.500px; display: flex; align-items: center; justify-content: space-between; }
.fix-head h2 { font-size: 16.350px; font-weight: 600; padding-bottom: 1px; }
.gear { width: 50.500px; height: 44.500px; padding-bottom: 4px; }
.fix-body { padding: 14.400px 14.500px 0; }
.info { height: 62px; border-radius: 14px; background: #edf5ff; color: #0b2f6b; padding: 11.600px 12px; white-space: nowrap; }
.detail { border: 1px solid #e6effb; border-radius: 14px; margin-top: 14.600px; padding: 11.500px 12px; white-space: nowrap; }
.change { height: 94.600px; } .rationale { height: 114.600px; }
.detail span { display: block; font-size: 14.350px; line-height: 20px; color: #6b7280; font-weight: 400; }
.detail strong { display: block; font-size: 16.650px; line-height: 19.150px; font-weight: 600; margin-top: 8px; }
.fix-actions { display: flex; gap: 9.600px; margin-top: 14px; }
.fix-actions .btn { height: 41px; padding-bottom: 1px; }
.fix-actions .accept { width: 211px; padding-bottom: 3px; font-size: 15.300px; } .apply { width: 160px; }
.fix-note { margin-top: 14px; border-top: 1px dashed #e6effb; padding: 15.500px 14.500px; font-size: 14.270px; color: #6b7280; }
.tabs { height: 90.500px; padding: 33.500px 0 0 20px; display: flex; gap: 9.600px; border-bottom: 1px solid #e6edf7; }
.tabs .btn { height: 41px; }
.tab1 { width: 157px; } .tab2 { width: 128.500px; } .tab3 { width: 189px; }
.tabs .active { background: #0a2f6b; border-color: #0a2f6b; color: #fff; }
.panel { margin-left: 1px; width: 1055px; background: #fff; border: 1px solid #e6effb; border-radius: 30px; padding: 20px 19px; }
.blueprint { height: 239.500px; }
.two { display: grid; grid-template-columns: 1fr 1fr; gap: 15px; }
.tile { background: #edf5ff; border-radius: 14px; color: #0b2f6b; padding: 14.300px 14.500px; }
.two .tile { height: 154px; padding-top: 13.500px; }
.panel h4 { color: #151d2b; font-size: 16.550px; line-height: 19px; font-weight: 600; }
.tile ul { padding-left: 19.200px; margin-top: 10.500px; }
.tile li { white-space: nowrap; margin-bottom: 1px; line-height: 18.350px; }
.notes { display: flex; gap: 9.600px; margin-top: 14.500px; font-size: 14.320px; color: #6b7280; }
.notes > span { height: 30px; border: 1px solid #e6effb; border-radius: 15px; display: grid; place-items: center; }
.arrow { font-style: normal; font-size: 11px; line-height: 1; }
.n1 { width: 270px; } .n2 { width: 236px; } .n3 { width: 191.500px; }
.ethics { margin-top: 15px; height: 179.500px; padding-top: 19px; }
.ethics-grid { display: grid; grid-template-columns: 667px 1fr; gap: 15px; margin-top: 15.500px; }
.ethics .tile { height: 104px; white-space: nowrap; }
.ethics .tile span { display: block; color: #6b7280; font-size: 14.400px; }

/* Map drawing */
.land { fill: #f5f3f5; }
.st { fill: none; stroke: #d3dde5; stroke-width: 1.100; }
.sand { fill: #fcefd2; }
.hosp { fill: #fde0dc; }
.park { fill: #c5efd8; }
.parkline { fill: none; stroke: #a5d8bf; stroke-width: .8; }
.water path { fill: #93dcee; }
.road { fill: none; stroke: #ced9e2; stroke-width: 1.900; }
.road.maj { stroke: #cad6df; stroke-width: 3.200; }
.hwy { fill: none; stroke: #8ba5c1; stroke-width: 4; }
.hwy .thick { stroke-width: 6; }
.hwy .casing { stroke: #a7bbd2; stroke-width: 1; }
.shield circle, .shield rect { fill: #fff; stroke: #8a939c; stroke-width: .8; }
.shield-no { font: 500 5px Roboto, sans-serif; text-anchor: middle; fill: #444; }
.shield-no.light { fill: #fff; }
.inter { fill: #4a78bb; }
.inter-top { stroke: #d9534f; stroke-width: 2; }
.area { font: 500 6.600px Roboto, sans-serif; letter-spacing: .7px; text-anchor: middle; fill: #4b4f54; }
.street { font: 6.600px Roboto, sans-serif; fill: #5c6670; }
.area, .street, .poi { stroke: #f8f7f9; stroke-width: 1.200px; paint-order: stroke; stroke-linejoin: round; }
.poi { font: 7.800px Roboto, sans-serif; }
.purple { fill: #9b4fe0; }
.greentext { fill: #358f6d; stroke: #e2f5ea; }
.slate { fill: #74828d; }
.bluetext { fill: #3f83df; }
.orangetext { fill: #e8731d; }
.pins circle { stroke: #fff; stroke-width: .8; }
.glyph { fill: none; stroke: #fff; stroke-width: .9; }
.flag { fill: none; stroke-width: 2; }
.f-red { stroke: #ef4444; } .f-orange { stroke: #f97316; } .f-gray { stroke: #6b7280; }
.flag-no { font: 600 14.400px Inter, sans-serif; text-anchor: middle; }
.t-red { fill: #ef4444; } .t-orange { fill: #f97316; } .t-gray { fill: #6b7280; }
```
